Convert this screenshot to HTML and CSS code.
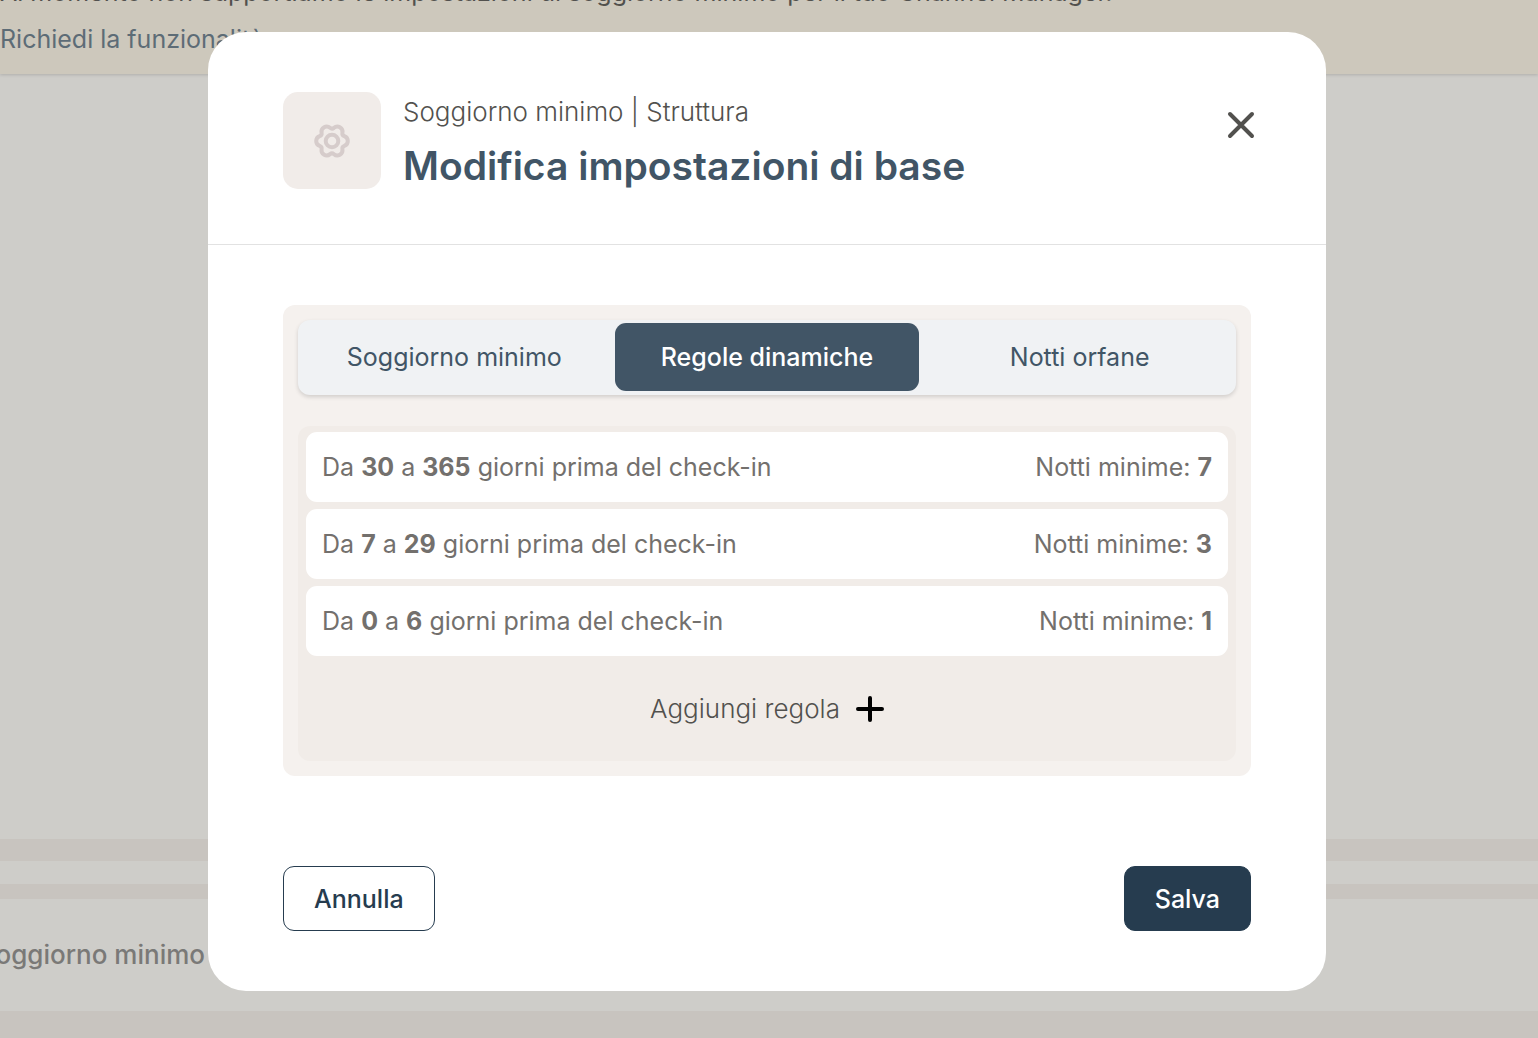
FILE: index.html
```html
<!DOCTYPE html>
<html lang="it">
<head>
    <meta charset="UTF-8">
    <meta name="viewport" content="width=device-width, initial-scale=1.0">
    <title>Modifica impostazioni di base</title>
    <link rel="stylesheet" href="styles.css">
</head>
<body>
    <div class="page">
        <div class="banner">
            <p>Al momento non supportiamo le impostazioni di soggiorno minimo per il tuo Channel Manager.</p>
            <a href="#">Richiedi la funzionalità</a>
        </div>
        <div class="page-content"></div>
        <div class="page-strip"></div>
        <div class="page-row">
            <div class="row-label">Soggiorno minimo</div>
        </div>
    </div>

    <div class="overlay">
        <div class="modal" role="dialog" aria-modal="true" aria-labelledby="modalTitle">
            <header class="modal-header">
                <div class="header-icon">
                    <svg width="40" height="40" viewBox="-20 -20 40 40" fill="none" stroke="#d6cccb" stroke-width="4" aria-hidden="true">
                        <path d="M1.94 -13.15A5.2 5.2 0 0 1 10.42 -8.25A3 3 0 0 0 12.36 -4.89A5.2 5.2 0 0 1 12.36 4.89A3 3 0 0 0 10.42 8.25A5.2 5.2 0 0 1 1.94 13.15A3 3 0 0 0 -1.94 13.15A5.2 5.2 0 0 1 -10.42 8.25A3 3 0 0 0 -12.36 4.89A5.2 5.2 0 0 1 -12.36 -4.89A3 3 0 0 0 -10.42 -8.25A5.2 5.2 0 0 1 -1.94 -13.15A3 3 0 0 0 1.94 -13.15Z"/>
                        <circle r="6.3"/>
                    </svg>
                </div>
                <div class="header-text">
                    <p class="subtitle">Soggiorno minimo | Struttura</p>
                    <h1 id="modalTitle">Modifica impostazioni di base</h1>
                </div>
                <button type="button" class="close-btn" aria-label="Chiudi">
                    <svg width="28" height="28" viewBox="0 0 28 28" stroke="#52514e" stroke-width="4" stroke-linecap="round" aria-hidden="true">
                        <path d="M3 3L25 25M25 3L3 25"/>
                    </svg>
                </button>
            </header>

            <div class="modal-body">
                <div class="panel">
                    <div class="tabs" role="tablist">
                        <button type="button" class="tab" role="tab">Soggiorno minimo</button>
                        <button type="button" class="tab active" role="tab" aria-selected="true">Regole dinamiche</button>
                        <button type="button" class="tab" role="tab">Notti orfane</button>
                    </div>

                    <div class="rules">
                        <div class="rule">
                            <span>Da <b>30</b> a <b>365</b> giorni prima del check-in</span>
                            <span>Notti minime: <b>7</b></span>
                        </div>
                        <div class="rule">
                            <span>Da <b>7</b> a <b>29</b> giorni prima del check-in</span>
                            <span>Notti minime: <b>3</b></span>
                        </div>
                        <div class="rule">
                            <span>Da <b>0</b> a <b>6</b> giorni prima del check-in</span>
                            <span>Notti minime: <b>1</b></span>
                        </div>
                        <button type="button" class="add-rule">
                            Aggiungi regola
                            <svg width="28" height="28" viewBox="0 0 28 28" stroke="#000" stroke-width="4" stroke-linecap="round" aria-hidden="true">
                                <path d="M14 3V25M2 14H26"/>
                            </svg>
                        </button>
                    </div>
                </div>

                <div class="actions">
                    <button type="button" class="btn">Annulla</button>
                    <button type="button" class="btn primary">Salva</button>
                </div>
            </div>
        </div>
    </div>
</body>
</html>
```
FILE: styles.css
```css
* {
    box-sizing: border-box;
}

body {
    margin: 0;
    font-family: Inter, "Liberation Sans", sans-serif;
    font-size: 25px;
    line-height: 32px;
    color: #52514e;
    background: #c8c4bf;
}

p, h1 {
    margin: 0;
}

button {
    font: inherit;
    cursor: pointer;
}

/* page behind the dialog */
.page {
    height: 100vh;
    overflow: hidden;
    display: flex;
    flex-direction: column;
}

.banner {
    position: relative;
    height: 74px;
    flex-shrink: 0;
    padding-bottom: 19px;
    display: flex;
    flex-direction: column;
    justify-content: flex-end;
    gap: 15px;
    white-space: nowrap;
    background: #cdc8bc;
    box-shadow: 0 1px 3px rgba(0,0,0,0.15);
}

.banner a {
    color: #5d6c76;
    text-decoration: none;
}

.page-content {
    flex: 1;
    background: #cecdc9;
}

.page-strip {
    height: 23px;
    margin: 22px 0 15px;
    background: #cecdc9;
}

.page-row {
    height: 112px;
    margin-bottom: 27px;
    display: flex;
    align-items: center;
    background: #cecdc9;
}

.row-label {
    width: 205px;
    display: flex;
    justify-content: flex-end;
    white-space: nowrap;
    font-size: 26px;
    font-weight: 500;
    color: #7a7977;
}

/* dialog */
.overlay {
    position: fixed;
    inset: 0;
    padding: 32px 212px 32px 208px;
    overflow: auto;
}

.modal {
    background: #fff;
    border-radius: 38px;
}

.modal-header {
    display: flex;
    align-items: flex-start;
    padding: 60px 71px 52px 75px;
    border-bottom: 1px solid #e2e2e2;
}

.header-icon {
    width: 98px;
    height: 97px;
    display: flex;
    align-items: center;
    justify-content: center;
    background: #f1ece9;
    border-radius: 15px;
}

.header-text {
    flex: 1;
    padding: 4px 0 0 22px;
}

.subtitle {
    font-size: 26px;
    font-weight: 300;
}

h1 {
    margin-top: 12px;
    font-size: 39px;
    line-height: 52px;
    font-weight: 600;
    color: #415566;
}

.close-btn {
    display: flex;
    margin-top: 19px;
    padding: 0;
    border: none;
    background: none;
}

.modal-body {
    padding: 60px 75px;
}

.panel {
    padding: 15px;
    background: #f5f1ee;
    border-radius: 12px;
}

.tabs {
    display: grid;
    grid-template-columns: repeat(3, 1fr);
    gap: 8px;
    padding: 3px 4px 4px;
    background: #f0f2f4;
    border-radius: 12px;
    box-shadow: 0 2px 4px rgba(0,0,0,0.15);
}

.tab {
    height: 68px;
    padding: 0;
    border: none;
    border-radius: 11px;
    background: none;
    color: #415566;
}

.tab.active {
    background: #415566;
    color: #fff;
    font-weight: 500;
}

.rules {
    display: flex;
    flex-direction: column;
    gap: 7px;
    margin-top: 31px;
    padding: 6px 8px;
    background: #f1ece8;
    border-radius: 12px;
}

.rule {
    display: flex;
    align-items: center;
    justify-content: space-between;
    height: 70px;
    padding: 0 16px;
    background: #fff;
    border-radius: 11px;
    color: #73706d;
}

.rule b {
    font-weight: 700;
}

.add-rule {
    display: flex;
    align-items: center;
    justify-content: center;
    gap: 16px;
    height: 92px;
    border: none;
    background: none;
    font-size: 26px;
    font-weight: 300;
    color: #52514e;
}

.actions {
    display: flex;
    justify-content: space-between;
    margin-top: 90px;
}

.btn {
    height: 65px;
    padding: 0 30px;
    border: 1px solid #263c4f;
    border-radius: 11px;
    background: #fff;
    color: #263c4f;
    font-weight: 500;
}

.btn.primary {
    background: #263c4f;
    color: #fff;
}
```
